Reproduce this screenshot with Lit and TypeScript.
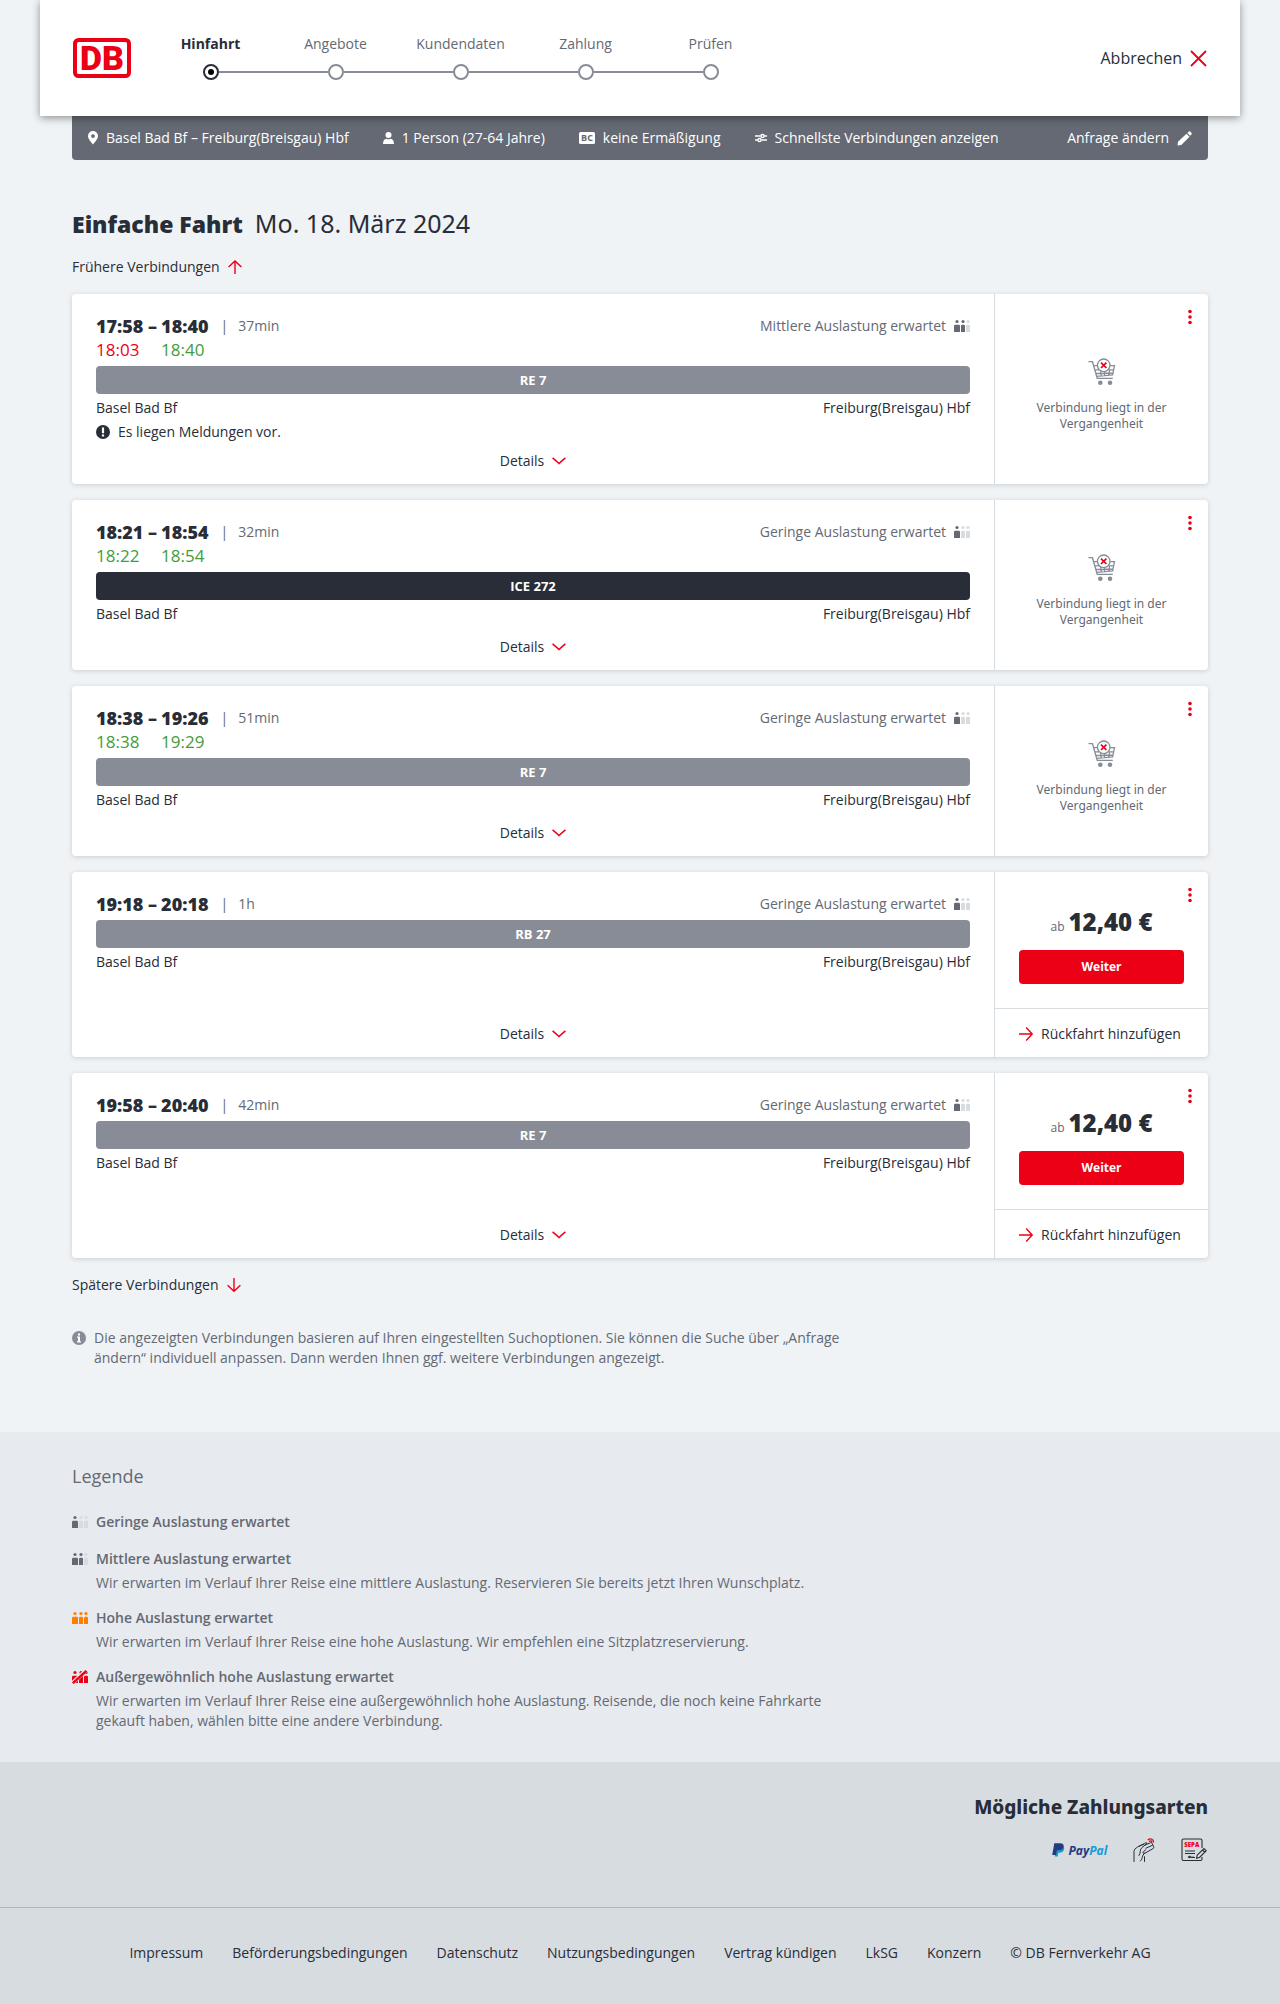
import { LitElement, html, svg, css, nothing } from 'lit';
import { customElement, property } from 'lit/decorators.js';
import { classMap } from 'lit/directives/class-map.js';

type Load = 'low' | 'medium' | 'high' | 'extreme';

interface Connection {
  departure: string;
  arrival: string;
  liveDeparture?: string;
  liveArrival?: string;
  late?: boolean;
  duration: string;
  load: Load;
  train: string;
  longDistance?: boolean;
  message?: string;
  price?: string;
}

const LOAD_LABELS: Record<Load, string> = {
  low: 'Geringe Auslastung erwartet',
  medium: 'Mittlere Auslastung erwartet',
  high: 'Hohe Auslastung erwartet',
  extreme: 'Außergewöhnlich hohe Auslastung erwartet',
};

const LEGEND: { load: Load; text?: string }[] = [
  { load: 'low' },
  {
    load: 'medium',
    text: 'Wir erwarten im Verlauf Ihrer Reise eine mittlere Auslastung. Reservieren Sie bereits jetzt Ihren Wunschplatz.',
  },
  {
    load: 'high',
    text: 'Wir erwarten im Verlauf Ihrer Reise eine hohe Auslastung. Wir empfehlen eine Sitzplatzreservierung.',
  },
  {
    load: 'extreme',
    text: 'Wir erwarten im Verlauf Ihrer Reise eine außergewöhnlich hohe Auslastung. Reisende, die noch keine Fahrkarte gekauft haben, wählen bitte eine andere Verbindung.',
  },
];

const CONNECTIONS: Connection[] = [
  { departure: '17:58', arrival: '18:40', liveDeparture: '18:03', liveArrival: '18:40', late: true, duration: '37min', load: 'medium', train: 'RE 7', message: 'Es liegen Meldungen vor.' },
  { departure: '18:21', arrival: '18:54', liveDeparture: '18:22', liveArrival: '18:54', duration: '32min', load: 'low', train: 'ICE 272', longDistance: true },
  { departure: '18:38', arrival: '19:26', liveDeparture: '18:38', liveArrival: '19:29', duration: '51min', load: 'low', train: 'RE 7' },
  { departure: '19:18', arrival: '20:18', duration: '1h', load: 'low', train: 'RB 27', price: '12,40 €' },
  { departure: '19:58', arrival: '20:40', duration: '42min', load: 'low', train: 'RE 7', price: '12,40 €' },
];

const STEPS = ['Hinfahrt', 'Angebote', 'Kundendaten', 'Zahlung', 'Prüfen'];

const FOOTER_LINKS = [
  'Impressum',
  'Beförderungsbedingungen',
  'Datenschutz',
  'Nutzungsbedingungen',
  'Vertrag kündigen',
  'LkSG',
  'Konzern',
];

const shared = css`
  * {
    box-sizing: border-box;
  }
  svg {
    display: block;
    flex: none;
    overflow: visible;
  }
  button {
    font: inherit;
    color: inherit;
    background: none;
    border: 0;
    padding: 0;
    cursor: pointer;
  }
  a {
    color: inherit;
    text-decoration: none;
  }
  .text-button {
    display: flex;
    align-items: center;
    gap: 8px;
    line-height: 24px;
    white-space: nowrap;
  }
`;

const pinIcon = html`<svg width="10" height="14" viewBox="0 0 10 14" aria-hidden="true"><path fill="#fff" fill-rule="evenodd" d="M5 0a5 5 0 0 1 5 5c0 3.200-3 5.600-5 8.600C3 10.600 0 8.200 0 5a5 5 0 0 1 5-5Zm0 3.200a1.900 1.900 0 1 0 0 3.800 1.900 1.900 0 0 0 0-3.800Z"/></svg>`;
const personIcon = html`<svg width="11" height="12" viewBox="0 0 11 12" aria-hidden="true"><circle cx="5.500" cy="3" r="3" fill="#fff"/><path fill="#fff" d="M0 12c0-3.200 1.300-5 3.400-5.300a4 4 0 0 0 4.200 0C9.700 7 11 8.800 11 12Z"/></svg>`;
const cardIcon = html`<svg width="16" height="12" viewBox="0 0 16 12" aria-hidden="true"><rect width="16" height="12" rx="1.500" fill="#fff"/><text x="8" y="9.300" text-anchor="middle" font-size="9" font-weight="700" fill="#646973">BC</text></svg>`;
const slidersIcon = html`<svg width="12" height="10" viewBox="0 0 12 10" fill="none" stroke="#fff" stroke-width="1.500" aria-hidden="true"><path d="M0 3h5.500M9.500 3H12M0 7h2.500M6.500 7H12"/><circle cx="7.500" cy="3" r="1.600"/><circle cx="4.500" cy="7" r="1.600"/></svg>`;
const pencilIcon = html`<svg width="15" height="15" viewBox="0 0 15 15" aria-hidden="true"><path fill="#fff" d="M.5 14.500 1 10.800 9.500 2.800l3 3-8.200 8.200ZM10.400 2l1.200-1.200a1.300 1.300 0 0 1 1.800 0l1 1a1.300 1.300 0 0 1 0 1.800l-1.200 1.200Z"/></svg>`;
const closeIcon = html`<svg width="17" height="17" viewBox="0 0 17 17" fill="none" stroke="#ec0016" stroke-width="1.800" aria-hidden="true"><path d="m1 1 15 15M16 1 1 16"/></svg>`;
const upIcon = html`<svg width="14" height="14" viewBox="0 0 14 14" fill="none" stroke="#ec0016" stroke-width="1.400" aria-hidden="true"><path d="M7 14V1M.6 7 7 .900 13.400 7"/></svg>`;
const downIcon = html`<svg width="14" height="14" viewBox="0 0 14 14" fill="none" stroke="#ec0016" stroke-width="1.400" aria-hidden="true"><path d="M7 0v13M.6 7.200 7 13.200l6.400-6"/></svg>`;
const rightIcon = html`<svg width="14" height="14" viewBox="0 0 14 14" fill="none" stroke="#ec0016" stroke-width="1.400" aria-hidden="true"><path d="M0 7h13M7.200.600 13.200 7l-6 6.400"/></svg>`;
const chevronIcon = html`<svg width="14" height="14" viewBox="0 0 14 14" fill="none" stroke="#ec0016" stroke-width="1.500" aria-hidden="true"><path d="M.6 3.800Q4.500 7 7 9.600 9.500 7 13.400 3.800"/></svg>`;
const dotsIcon = html`<svg width="4" height="16" viewBox="0 0 4 16" fill="#ec0016" aria-hidden="true"><circle cx="2" cy="2.500" r="1.800"/><circle cx="2" cy="8" r="1.800"/><circle cx="2" cy="13.500" r="1.800"/></svg>`;
const alertIcon = html`<svg width="14" height="14" viewBox="0 0 14 14" aria-hidden="true"><circle cx="7" cy="7" r="7" fill="#282d37"/><path fill="#fff" d="M5.900 2.500h2.200v5.800H5.900Zm0 7h2.200v2H5.900Z"/></svg>`;
const infoIcon = html`<svg width="14" height="14" viewBox="0 0 14 14" aria-hidden="true"><circle cx="7" cy="7" r="7" fill="#878c96"/><path fill="#fff" d="M6 2.500h2v2H6ZM5 5.500h3v4.700h1v1.300H5v-1.300h1V6.700H5Z"/></svg>`;
const cartIcon = html`<svg width="28" height="28" viewBox="0 0 28 28" fill="none" stroke="#878c96" stroke-width="1.300" aria-hidden="true"><path d="M.5 3.700h4l4.700 16.600h15.600M6 7.700h4.500M20.500 7.700h6l-1.900 9.300-16 1.300M7 11.800h4M20.500 11.800h5M8 15.500l17-.5M12.500 12.500l.8 5.300M16.500 14v3.700M21.500 12.500l-.8 5"/><circle cx="15.700" cy="7.300" r="6.300" fill="#fff"/><circle cx="12.300" cy="24.700" r="2.300" fill="#878c96" stroke="none"/><circle cx="22" cy="24.700" r="2.300" fill="#878c96" stroke="none"/><path stroke="#ec0016" stroke-width="1.700" d="m13 4.600 5.400 5.400M18.400 4.600 13 10"/></svg>`;

const logo = html`<svg width="58" height="40" viewBox="0 0 58 40" role="img" aria-label="DB"><rect x="2" y="2" width="54" height="36" rx="3.500" fill="#fff" stroke="#ec0016" stroke-width="4"/><text x="29" y="32" text-anchor="middle" font-family="Roboto, sans-serif" font-weight="900" font-size="34" fill="#ec0016">DB</text></svg>`;
const paypal = html`<svg width="57" height="20" viewBox="0 0 57 20" role="img" aria-label="PayPal"><path fill="#179bd7" d="M4.500 6.500h7c.8.900.9 2 .5 3.300-.6 2.100-2.300 3-4.400 3H6.400l-.7 3.700H2.700Z"/><path fill="#253b80" d="M2.300 3.200h6c2.500 0 3.800 1.300 3.300 3.600-.5 2.400-2.300 3.500-4.700 3.500H4.900l-.8 4.700H.2Z"/><text x="16.500" y="15" font-size="12" font-weight="700" font-style="italic" fill="#253b80">Pay<tspan fill="#179bd7">Pal</tspan></text></svg>`;
const handCard = html`<svg width="24" height="24" viewBox="0 0 24 24" fill="none" stroke="#282d37" stroke-width="1" stroke-linejoin="round" stroke-linecap="round" aria-hidden="true"><path d="M1 23.500V13.800c0-2.500 1.700-3.500 3.600-4.800C6.500 7.700 8 7.200 10.500 6.500M6 17.500C8 15 6.500 12 8.500 10l4.800-4c2-1.500-.2-1.600-2-.5L6.500 8.200M11.500 23.500v-4.800M7.500 23c2.500-2 1-5.200 4-8"/><path d="M11.500 7.300 17.500 4.700c.8-.3 1.300 0 1.600.7l1.600 3.500c.3.800 0 1.400-.8 1.800L12 15.200c-1.400.6-2.600-.4-1.600-1.500l2.400-2M13 10.200l6.500-3"/><path stroke="#ec0016" stroke-width="1.300" d="M15.200 1.600c2.500-1.600 5.500-.2 5.300 2.400M16.400 3.200c1.200-.8 2.400-.2 2.300.9"/></svg>`;
const sepa = html`<svg width="26" height="24" viewBox="0 0 26 24" fill="none" stroke="#282d37" stroke-width="1.100" role="img" aria-label="SEPA"><path d="M21 10V2.500A1.500 1.500 0 0 0 19.500 1H2.500A1.500 1.500 0 0 0 1 2.500v18.500A1.500 1.500 0 0 0 2.500 22.500h17A1.500 1.500 0 0 0 21 21v-2M4 13h10M4 15.500h10"/><path d="m16.200 17.200 6.800-6.700 2.200 2.200-6.700 6.800-2.900.8ZM21.500 12l2.200 2.200M7 19.500l1.200-1 .3 1 1.200-1 .5 1h1.300l.5-.5.5.500h1.500"/><text x="10.800" y="9.200" text-anchor="middle" font-size="6" font-weight="900" fill="#ec0016" stroke="none">SEPA</text></svg>`;

/** Three figures showing how full a train is expected to be. */
@customElement('load-icon')
export class LoadIcon extends LitElement {
  static styles = css`
    :host {
      display: block;
      flex: none;
    }
    svg {
      display: block;
    }
  `;

  @property() load: Load = 'low';

  render() {
    const filled = { low: 1, medium: 2, high: 3, extreme: 3 }[this.load];
    const active = { low: '#646973', medium: '#646973', high: '#ff7f00', extreme: '#ec0016' }[this.load];
    const figures = [
      { x: 0, w: 6 },
      { x: 7, w: 4 },
      { x: 12, w: 4 },
    ];
    return html`<svg width="16" height="14" viewBox="0 0 16 14" aria-hidden="true">
      <defs>
        <mask id="gap">
          <rect width="16" height="14" fill="#fff" />
          <path d="M-1 14.500 15.500-1" stroke="#000" stroke-width="4" />
        </mask>
      </defs>
      <g mask=${this.load === 'extreme' ? 'url(#gap)' : nothing}>
        ${figures.map(({ x, w }, i) => {
          const fill = i < filled ? active : '#d7dce1';
          return svg`<circle cx=${x + w / 2} cy="2.500" r="1.600" fill=${fill}></circle>
            <path fill=${fill} d="M${x} 13V7q0-1.200 1.200-1.200h${w - 2.4}q1.200 0 1.200 1.200V13Z"></path>`;
        })}
      </g>
      ${this.load === 'extreme'
        ? svg`<path d="M.8 13.200 14.500.8" stroke=${active} stroke-width="2.400"></path>`
        : nothing}
    </svg>`;
  }
}

@customElement('connection-card')
export class ConnectionCard extends LitElement {
  static styles = [
    shared,
    css`
      :host {
        display: block;
      }
      .card {
        display: flex;
        position: relative;
        min-height: 170px;
        background: #fff;
        border-radius: 4px;
        box-shadow: 0 1px 5px rgba(40, 45, 55, 0.18);
      }
      .trip {
        flex: 1;
        min-width: 0;
        display: flex;
        flex-direction: column;
        padding: 20px 24px 11px;
      }
      .head {
        display: flex;
        justify-content: space-between;
        align-items: flex-start;
        line-height: 24px;
      }
      .times {
        display: grid;
        grid-template-columns: repeat(3, max-content);
        column-gap: 4px;
      }
      .time {
        font-family: 'Noto Sans', sans-serif;
        font-size: 18px;
        font-weight: 900;
      }
      .live {
        font-size: 17px;
        color: #429c3b;
      }
      .late {
        color: #ec0016;
      }
      .duration {
        display: flex;
        gap: 10px;
        padding-left: 8px;
        color: #646973;
      }
      .load {
        display: flex;
        align-items: center;
        gap: 8px;
        color: #646973;
      }
      .train {
        margin-top: 4px;
        border-radius: 4px;
        background: #878c96;
        color: #fff;
        font-size: 13px;
        font-weight: 700;
        line-height: 28px;
        text-align: center;
      }
      .long-distance {
        background: #282d37;
      }
      .stations {
        display: flex;
        justify-content: space-between;
        margin-top: 2px;
        line-height: 24px;
      }
      .message {
        display: flex;
        align-items: center;
        gap: 8px;
        margin-bottom: 5px;
        line-height: 24px;
      }
      .details {
        align-self: center;
        margin-top: auto;
      }
      .side {
        width: 214px;
        flex: none;
        display: flex;
        flex-direction: column;
        border-left: 1px solid #d7dce1;
      }
      .past {
        margin: auto;
        padding: 12px 24px 0;
        display: flex;
        flex-direction: column;
        align-items: center;
        gap: 14px;
        color: #646973;
        font-family: 'Noto Sans', sans-serif;
        font-size: 12px;
        line-height: 16px;
        text-align: center;
      }
      .offer {
        display: flex;
        flex-direction: column;
        gap: 10px;
        padding: 32px 24px 24px;
      }
      .price {
        display: flex;
        justify-content: center;
        align-items: baseline;
        gap: 4px;
        font-size: 12px;
        line-height: 20px;
        color: #646973;
      }
      .amount {
        font-family: 'Noto Sans', sans-serif;
        font-size: 24px;
        font-weight: 900;
        line-height: 36px;
        color: #282d37;
      }
      .primary {
        border-radius: 4px;
        background: #ec0016;
        color: #fff;
        font-size: 12px;
        font-weight: 700;
        line-height: 34px;
      }
      .return {
        border-top: 1px solid #d7dce1;
        padding: 13px 24px 11px;
      }
      .menu {
        position: absolute;
        top: 9px;
        right: 8px;
        padding: 6px 8px;
      }
    `,
  ];

  @property({ attribute: false }) data!: Connection;

  render() {
    const c = this.data;
    return html`<article class="card">
      <div class="trip">
        <div class="head">
          <div class="times">
            <span class="time">${c.departure} –</span>
            <span class="time">${c.arrival}</span>
            <span class="duration"><span>|</span><span>${c.duration}</span></span>
            ${c.liveDeparture
              ? html`<span class=${classMap({ live: true, late: !!c.late })}>${c.liveDeparture}</span>
                  <span class="live">${c.liveArrival}</span>`
              : nothing}
          </div>
          <div class="load">
            <span>${LOAD_LABELS[c.load]}</span>
            <load-icon .load=${c.load}></load-icon>
          </div>
        </div>
        <div class=${classMap({ train: true, 'long-distance': !!c.longDistance })}>${c.train}</div>
        <div class="stations"><span>Basel Bad Bf</span><span>Freiburg(Breisgau) Hbf</span></div>
        ${c.message ? html`<div class="message">${alertIcon}<span>${c.message}</span></div>` : nothing}
        <button class="text-button details" type="button">Details ${chevronIcon}</button>
      </div>
      <div class="side">
        ${c.price
          ? html`<div class="offer">
                <div class="price"><span>ab</span><span class="amount">${c.price}</span></div>
                <button class="primary" type="button">Weiter</button>
              </div>
              <button class="text-button return" type="button">${rightIcon} Rückfahrt hinzufügen</button>`
          : html`<div class="past">${cartIcon}<span>Verbindung liegt in der Vergangenheit</span></div>`}
      </div>
      <button class="menu" type="button" aria-label="Weitere Optionen">${dotsIcon}</button>
    </article>`;
  }
}

@customElement('app-root')
export class AppRoot extends LitElement {
  static styles = [
    shared,
    css`
      :host {
        display: block;
        background: #eff3f6;
        color: #282d37;
        font-family: 'Open Sans', 'Noto Sans', sans-serif;
        font-size: 14px;
        line-height: 20px;
      }
      h1,
      h2,
      p,
      ol,
      ul {
        margin: 0;
        padding: 0;
        list-style: none;
      }
      .header {
        position: relative;
        z-index: 1;
        display: flex;
        align-items: center;
        gap: 17px;
        max-width: 1200px;
        min-height: 116px;
        margin: 0 auto;
        padding: 0 33px;
        background: #fff;
        box-shadow: 0 2px 8px rgba(0, 0, 0, 0.4);
      }
      .steps {
        display: flex;
        padding-bottom: 2px;
      }
      .step {
        display: flex;
        flex-direction: column;
        gap: 10px;
        width: 125px;
        text-align: center;
        color: #646973;
      }
      .current {
        color: #282d37;
        font-weight: 700;
      }
      .track {
        display: flex;
        align-items: center;
      }
      .track::before,
      .track::after {
        content: '';
        flex: 1;
        height: 2px;
        background: #878c96;
      }
      .step:first-child .track::before,
      .step:last-child .track::after {
        background: none;
      }
      .dot {
        display: grid;
        place-items: center;
        width: 16px;
        height: 16px;
        border: 2px solid #878c96;
        border-radius: 50%;
      }
      .current .dot {
        border-color: #282d37;
      }
      .current .dot::after {
        content: '';
        width: 6px;
        height: 6px;
        border-radius: 50%;
        background: #000;
      }
      .cancel {
        margin-left: auto;
        font-size: 16px;
      }
      .content {
        max-width: 1136px;
        margin: 0 auto;
      }
      .summary {
        display: flex;
        align-items: center;
        gap: 34px;
        min-height: 44px;
        padding: 0 16px;
        border-radius: 0 0 4px 4px;
        background: #646973;
        color: #fff;
      }
      .criterion {
        display: flex;
        align-items: center;
        gap: 8px;
      }
      .edit {
        margin-left: auto;
      }
      .title {
        display: flex;
        align-items: baseline;
        gap: 12px;
        padding: 47px 0 15px;
        font-family: 'Noto Sans', sans-serif;
        font-size: 23px;
        font-weight: 900;
        line-height: 32px;
      }
      .date {
        font-size: 25px;
        font-weight: 400;
      }
      .list {
        display: flex;
        flex-direction: column;
        gap: 16px;
        margin: 15px 0;
      }
      .hint {
        display: flex;
        gap: 8px;
        max-width: 776px;
        padding: 31px 0 64px;
        color: #646973;
      }
      .hint svg {
        margin-top: 3px;
      }
      .legend {
        background: #e7eaef;
        color: #646973;
        padding: 32px 0 31px;
      }
      .legend-title {
        margin-bottom: 22px;
        font-size: 18px;
        font-weight: 400;
        line-height: 24px;
      }
      .entries {
        display: flex;
        flex-direction: column;
        gap: 13px;
        max-width: 776px;
      }
      .entry {
        display: grid;
        grid-template-columns: 16px 1fr;
        column-gap: 8px;
        row-gap: 2px;
        align-items: center;
      }
      .entry-name {
        font-weight: 600;
        line-height: 24px;
      }
      .entry-text {
        grid-column: 2;
      }
      .footer {
        background: #d7dce1;
      }
      .payment {
        display: flex;
        flex-direction: column;
        align-items: flex-end;
        gap: 13px;
        padding: 32px 0 41px;
      }
      .payment-title {
        font-family: 'Noto Sans', sans-serif;
        font-size: 19px;
        font-weight: 800;
        line-height: 26px;
      }
      .methods {
        display: flex;
        align-items: center;
        gap: 24px;
        min-height: 33px;
        padding-right: 1px;
      }
      .links {
        display: flex;
        flex-wrap: wrap;
        justify-content: center;
        gap: 8px 29px;
        padding: 33px 24px 39px;
        border-top: 1px solid #afb4bb;
        line-height: 24px;
      }
    `,
  ];

  render() {
    return html`
      <header class="header">
        <a href="#" aria-label="DB">${logo}</a>
        <ol class="steps">
          ${STEPS.map(
            (name, i) => html`<li class=${classMap({ step: true, current: i === 0 })}>
              <span>${name}</span>
              <span class="track"><span class="dot"></span></span>
            </li>`,
          )}
        </ol>
        <button class="text-button cancel" type="button">Abbrechen ${closeIcon}</button>
      </header>
      <main>
        <div class="content">
          <div class="summary">
            <span class="criterion">${pinIcon} Basel Bad Bf – Freiburg(Breisgau) Hbf</span>
            <span class="criterion">${personIcon} 1 Person (27-64 Jahre)</span>
            <span class="criterion">${cardIcon} keine Ermäßigung</span>
            <span class="criterion">${slidersIcon} Schnellste Verbindungen anzeigen</span>
            <button class="text-button edit" type="button">Anfrage ändern ${pencilIcon}</button>
          </div>
          <h1 class="title">Einfache Fahrt <span class="date">Mo. 18. März 2024</span></h1>
          <button class="text-button" type="button">Frühere Verbindungen ${upIcon}</button>
          <div class="list">
            ${CONNECTIONS.map((c) => html`<connection-card .data=${c}></connection-card>`)}
          </div>
          <button class="text-button" type="button">Spätere Verbindungen ${downIcon}</button>
          <p class="hint">
            ${infoIcon}
            <span>Die angezeigten Verbindungen basieren auf Ihren eingestellten Suchoptionen. Sie können die Suche über „Anfrage ändern“ individuell anpassen. Dann werden Ihnen ggf. weitere Verbindungen angezeigt.</span>
          </p>
        </div>
        <section class="legend">
          <div class="content">
            <h2 class="legend-title">Legende</h2>
            <ul class="entries">
              ${LEGEND.map(
                (e) => html`<li class="entry">
                  <load-icon .load=${e.load}></load-icon>
                  <span class="entry-name">${LOAD_LABELS[e.load]}</span>
                  ${e.text ? html`<p class="entry-text">${e.text}</p>` : nothing}
                </li>`,
              )}
            </ul>
          </div>
        </section>
      </main>
      <footer class="footer">
        <div class="content payment">
          <h2 class="payment-title">Mögliche Zahlungsarten</h2>
          <div class="methods">${paypal}${handCard}${sepa}</div>
        </div>
        <nav class="links">
          ${FOOTER_LINKS.map((l) => html`<a href="#">${l}</a>`)}
          <span>© DB Fernverkehr AG</span>
        </nav>
      </footer>
    `;
  }
}
